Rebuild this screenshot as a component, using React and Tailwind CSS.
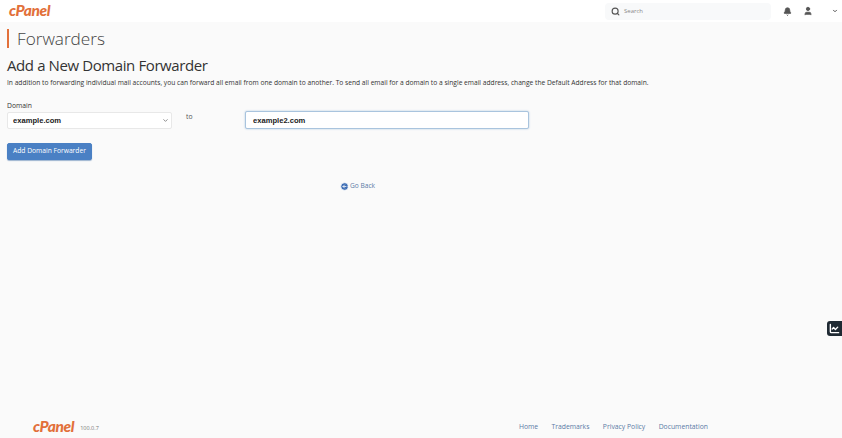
import React from 'react';
import { Search, Bell, User, ChevronDown, ArrowLeftCircle, ChartLine } from 'lucide-react';

const Logo = ({ className }) => (
    <span className={`font-['Lato',sans-serif] font-black italic tracking-tight text-[#e2703a] leading-none ${className}`}>cPanel</span>
);

const Header = () => (
    <div className="h-[22px] bg-white flex items-center pl-[9px] pr-[4px]">
        <Logo className="text-[15.5px]" />
        <div className="ml-auto w-[166px] h-[17px] bg-[#f8f9fa] rounded-sm flex items-center pl-[6px] gap-[4px]">
            <Search size={9} strokeWidth={3} className="text-[#555]" />
            <span className="text-[6px] text-[#888]">Search</span>
        </div>
        <Bell size={9} strokeWidth={2} fill="#555" className="text-[#555] ml-[12px]" />
        <User size={10} strokeWidth={2} fill="#555" className="text-[#555] ml-[11px]" />
        <ChevronDown size={6} strokeWidth={4} className="text-[#555] ml-[19px]" />
    </div>
);

const DomainForm = () => (
    <div className="flex mt-[13px]">
        <div className="w-[165px]">
            <label className="block text-[6.8px] leading-[10px] text-[#333] mb-[1px]">Domain</label>
            <div className="relative">
                <select className="appearance-none block w-full h-[17px] bg-white rounded-[2px] border border-[#e8e8e8] pl-[5px] text-[7.6px] font-bold text-[#222] font-['Liberation_Sans',sans-serif]">
                    <option>example.com</option>
                </select>
                <ChevronDown size={7} strokeWidth={2.5} className="absolute right-[3px] top-[5px] text-[#666]" />
            </div>
        </div>
        <div className="w-[73px] pl-[14px] pt-[11px] text-[6.8px] leading-[10px] text-[#555]">to</div>
        <input
            readOnly
            value="example2.com"
            className="mt-[10px] w-[284px] h-[18px] bg-white rounded-[2px] border border-[#a9c4de] shadow-[0_0_2px_#a9c4de] pl-[7px] text-[7.6px] font-bold text-[#222] font-['Liberation_Sans',sans-serif]"
        />
    </div>
);

export default function App() {
    return (
        <div className="h-[438px] w-[842px] overflow-hidden bg-[#fafafa] flex flex-col relative font-['Open_Sans',sans-serif]">
            <Header />
            <div className="px-[7px] flex-1">
                <div className="flex items-center mt-[7px] h-[19px]">
                    <div className="w-[2px] h-[19px] bg-[#e2703a]"></div>
                    <h1 className="ml-[8px] text-[17.2px] font-light text-[#444]">Forwarders</h1>
                </div>
                <h2 className="mt-[7px] text-[15px] tracking-[-0.4px] leading-[20px] text-[#333]">Add a New Domain Forwarder</h2>
                <p className="mt-[3px] text-[6.67px] leading-[10px] text-[#333]">
                    In addition to forwarding individual mail accounts, you can forward all email from one domain to another. To send all email for a domain to a single email address, change the Default Address for that domain.
                </p>
                <DomainForm />
                <button className="block mt-[14px] w-[85px] h-[17px] bg-[#4a80c4] rounded-[2px] border border-[#4a80c4] shadow-[0_1px_1px_#9db4d0] text-[6.7px] text-white">Add Domain Forwarder</button>
                <div className="mt-[21px] ml-[333px] flex items-center gap-[1px] text-[6.6px] leading-[10px] text-[#5a7ba6]">
                    <ArrowLeftCircle size={9} fill="#3f6fb5" stroke="#fff" strokeWidth={2} />
                    <span>Go Back</span>
                </div>
            </div>
            <div className="h-[22px] flex items-center pl-[33px]">
                <Logo className="text-[15.5px]" />
                <span className="ml-[6px] mt-[2px] text-[5.5px] text-[#777]">100.0.7</span>
                <div className="ml-auto mr-[134px] flex gap-[13.4px] text-[6.8px] text-[#5a7ba6]">
                    <span>Home</span>
                    <span>Trademarks</span>
                    <span>Privacy Policy</span>
                    <span>Documentation</span>
                </div>
            </div>
            <div className="absolute right-0 top-[321px] w-[15px] h-[15px] bg-[#1f2a33] rounded-l-[3px] flex items-center justify-center">
                <ChartLine size={11} strokeWidth={3} className="text-white" />
            </div>
        </div>
    );
}
